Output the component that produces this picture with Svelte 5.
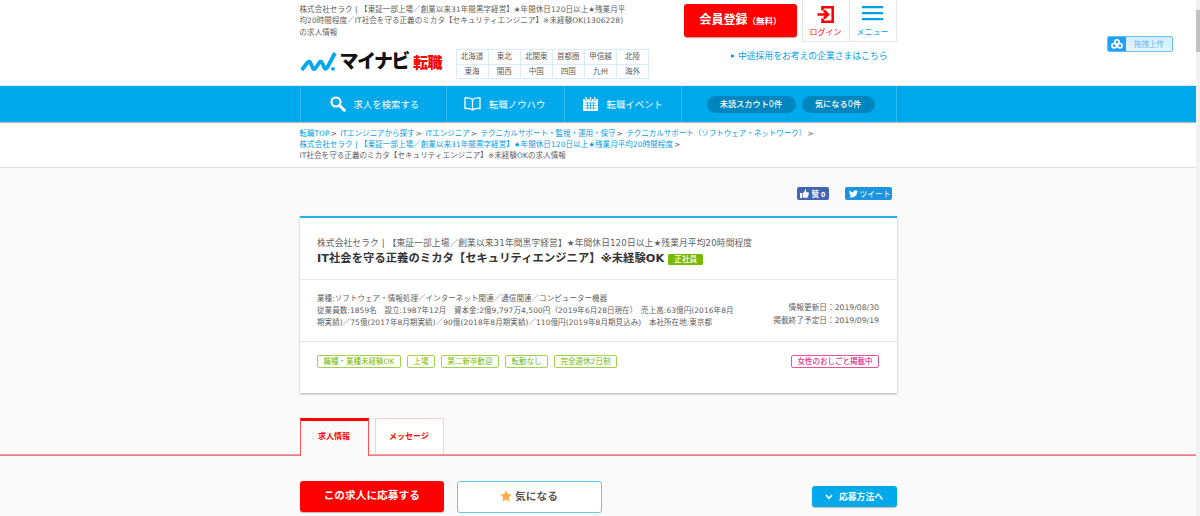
<script lang="ts">
  const regions = [
    ['北海道', '東北', '北関東', '首都圏', '甲信越', '北陸'],
    ['東海', '関西', '中国', '四国', '九州', '海外']
  ];

  const crumbs = [
    { label: '転職TOP' },
    { label: 'ITエンジニアから探す' },
    { label: 'ITエンジニア' },
    { label: 'テクニカルサポート・監視・運用・保守' },
    { label: 'テクニカルサポート（ソフトウェア・ネットワーク）' }
  ];

  const features = ['職種・業種未経験OK', '上場', '第二新卒歓迎', '転勤なし', '完全週休2日制'];
  const featureWidths = [84, 28, 58, 43, 63];
</script>

<header class="header">
  <div class="inner header-inner">
    <div class="header-left">
      <h1 class="lead">
        <span>株式会社セラク | 【東証一部上場／創業以来31年間黒字経営】★年間休日120日以上★残業月平</span>
        <span>均20時間程度／IT社会を守る正義のミカタ【セキュリティエンジニア】※未経験OK(1306228)</span>
        <span>の求人情報</span>
      </h1>
      <div class="brand">
        <div class="logo">
          <svg class="logo-mark" viewBox="0 0 37 21" width="37" height="21">
            <path d="M1.700 19L7.500 11.500Q9.300 9.500 10.500 12L12.800 17Q14 19.300 15.500 17.200L19.500 11.300Q21 9.500 22.200 12L24.300 16.500Q25.600 19 27.300 16.500L35 2" fill="none" stroke="#00a9ec" stroke-width="3.800" />
            <circle cx="33" cy="17.800" r="1.900" fill="#00a9ec" />
          </svg>
          <span class="logo-name">マイナビ</span>
          <span class="logo-sub">転職</span>
        </div>
        <div class="regions">
          {#each regions as row}
            {#each row as region}
              <a class="region">{region}</a>
            {/each}
          {/each}
        </div>
      </div>
    </div>
    <div class="header-right">
      <div class="account">
        <a class="signup">会員登録<small>（無料）</small></a>
        <div class="account-links">
          <a class="account-link login">
            <svg viewBox="0 0 18 18" width="18" height="18" fill="none" stroke="#f00" stroke-width="2.600">
              <path d="M5.500 5.500V2.300H15.700V16.700H5.500V13.500" />
              <path d="M0.500 9.500H10.500M7 5.500L11 9.500L7 13.500" />
            </svg>
            <span>ログイン</span>
          </a>
          <a class="account-link menu">
            <svg viewBox="0 0 21 18" width="21" height="18" stroke="#00a0e4" stroke-width="2.300">
              <path d="M0 2.200H21M0 8.200H21M0 14.200H21" />
            </svg>
            <span>メニュー</span>
          </a>
        </div>
      </div>
      <a class="for-company">中途採用をお考えの企業さまはこちら</a>
    </div>
  </div>
</header>

<nav class="nav">
  <div class="inner nav-inner">
    <a class="nav-item search">
      <svg viewBox="0 0 16 16" width="16" height="16" fill="none" stroke="#fff">
        <circle cx="6" cy="6" r="4.500" stroke-width="2.200" />
        <path d="M9.500 9.500L14.300 14.300" stroke-width="3" stroke-linecap="round" />
      </svg>
      <span>求人を検索する</span>
    </a>
    <a class="nav-item knowhow">
      <svg viewBox="0 0 17 14" width="17" height="14" fill="none" stroke="#fff" stroke-width="1.300">
        <path d="M8.500 2.500C6.500 0.700 4 0.700 1 1V11.500C4 11 6.500 11.200 8.500 13C10.500 11.200 13 11 16 11.500V1C13 0.700 10.500 0.700 8.500 2.500V12.500" />
      </svg>
      <span>転職ノウハウ</span>
    </a>
    <a class="nav-item event">
      <svg viewBox="0 0 17 14" width="17" height="14">
        <path d="M1 2H16V14H1Z" fill="#fff" />
        <path d="M4.200 0V3.500M8.500 0V3.500M12.800 0V3.500" stroke="#00a9ec" stroke-width="2.600" />
        <path d="M4.200 0V3M8.500 0V3M12.800 0V3" stroke="#fff" stroke-width="1.200" />
        <path d="M3 6H14M3 8.500H14M3 11H14M5.500 5V12.500M8.500 5V12.500M11.500 5V12.500" stroke="#00a9ec" stroke-width="0.700" />
      </svg>
      <span>転職イベント</span>
    </a>
    <div class="nav-status">
      <a class="pill scout">未読スカウト0件</a>
      <a class="pill liked">気になる0件</a>
    </div>
  </div>
</nav>

<div class="breadcrumb">
  <div class="inner">
    <div class="crumb-row">
      {#each crumbs as crumb}
        <a>{crumb.label}</a><i>&gt;</i>
      {/each}
    </div>
    <div class="crumb-row wide">
      <a>株式会社セラク | 【東証一部上場／創業以来31年間黒字経営】★年間休日120日以上★残業月平均20時間程度</a><i>&gt;</i>
    </div>
    <div class="crumb-row wide">IT社会を守る正義のミカタ【セキュリティエンジニア】※未経験OKの求人情報</div>
  </div>
</div>

<main>
  <div class="inner">
    <div class="social">
      <a class="like">
        <svg viewBox="0 0 10 10" width="9" height="9" fill="#fff">
          <path d="M0 4.500H2.500V10H0ZM3.200 4.700L5.500 2V0.500C6.500 0 7.300 1 6.600 3.700H9.300C10 3.700 10 5 9.500 5.300C10 6 9.700 6.800 9.100 7C9.400 7.600 9.100 8.300 8.500 8.500C8.600 9.200 8.300 9.700 7.700 9.700H4.500L3.200 9Z" />
        </svg>
        <span>赞 0</span>
      </a>
      <a class="tweet">
        <svg viewBox="0 0 24 20" width="9" height="8" fill="#fff">
          <path d="M24 2.400a10 10 0 0 1-2.800.8A5 5 0 0 0 23.300.4a10 10 0 0 1-3.100 1.200A4.900 4.900 0 0 0 11.800 6 14 14 0 0 1 1.700.9a4.900 4.900 0 0 0 1.500 6.600A5 5 0 0 1 1 6.900a4.900 4.900 0 0 0 3.900 4.900 5 5 0 0 1-2.200.1 4.900 4.900 0 0 0 4.600 3.400A10 10 0 0 1 0 17.300 14 14 0 0 0 21.500 4.900 10 10 0 0 0 24 2.400Z" />
        </svg>
        <span>ツイート</span>
      </a>
    </div>

    <section class="card">
      <div class="card-head">
        <p class="company">株式会社セラク | 【東証一部上場／創業以来31年間黒字経営】★年間休日120日以上★残業月平均20時間程度</p>
        <h2><span class="job-title">IT社会を守る正義のミカタ【セキュリティエンジニア】※未経験OK</span><span class="status">正社員</span></h2>
      </div>
      <div class="card-body">
        <div class="profile">
          <p>業種:ソフトウェア・情報処理／インターネット関連／通信関連／コンピューター機器</p>
          <p>従業員数:1859名　設立:1987年12月　資本金:2億9,797万4,500円（2019年6月28日現在）　売上高:63億円(2016年8月</p>
          <p>期実績)／75億(2017年8月期実績)／90億(2018年8月期実績)／110億円(2019年8月期見込み)　本社所在地:東京都</p>
        </div>
        <div class="dates">
          <p>情報更新日：2019/08/30</p>
          <p>掲載終了予定日：2019/09/19</p>
        </div>
      </div>
      <div class="card-foot">
        {#each features as feature, i}
          <span class="tag" style="width: {featureWidths[i]}px">{feature}</span>
        {/each}
        <span class="tag pink">女性のおしごと掲載中</span>
      </div>
    </section>
  </div>

  <div class="tab-bar">
    <div class="inner tabs">
      <a class="tab active">求人情報</a>
      <a class="tab">メッセージ</a>
    </div>
  </div>

  <div class="inner actions">
    <a class="apply">この求人に応募する</a>
    <a class="keep">
      <svg viewBox="0 0 12 12" width="12" height="12"><path d="M6 0.300L7.700 4L11.800 4.500L8.800 7.300L9.600 11.500L6 9.400L2.400 11.500L3.200 7.300L0.200 4.500L4.300 4Z" fill="#fdac45" /></svg>
      <span>気になる</span>
    </a>
    <a class="how-to">
      <svg viewBox="0 0 8 6" width="8" height="6"><path d="M1 1L4 4.300L7 1" fill="none" stroke="#fff" stroke-width="1.500" /></svg>
      <span>応募方法へ</span>
    </a>
  </div>
</main>

<div class="upload">
  <span class="upload-icon">
    <svg viewBox="0 0 12 10" width="12" height="10" fill="none" stroke="#fff" stroke-width="1.700">
      <circle cx="6" cy="3.100" r="2.200" />
      <circle cx="3.100" cy="6.700" r="2.200" />
      <circle cx="8.900" cy="6.700" r="2.200" />
    </svg>
  </span>
  <span class="upload-text">拖拽上传</span>
</div>

<div class="scrollbar"><div class="thumb"></div></div>

<style>
  :global(body) {
    margin: 0;
    height: 516px;
    overflow: hidden;
    background: #fafafa;
    color: #606060;
    font-family: 'DejaVu Sans', 'Noto Sans CJK JP', sans-serif;
    font-size: 7.5px;
  }

  p,
  h1,
  h2 {
    margin: 0;
    font-weight: 400;
  }

  a,
  span {
    white-space: nowrap;
  }

  svg {
    display: block;
    flex: none;
  }

  .inner {
    width: 597px;
    margin-left: 299.5px;
  }

  /* header */
  .header {
    height: 85px;
    background: #fff;
    border-bottom: 1px solid #dde8ed;
  }

  .header-inner {
    display: flex;
    justify-content: space-between;
  }

  .lead {
    padding-top: 4px;
    font-size: 7.5px;
    letter-spacing: 0.08px;
    line-height: 11.4px;
  }

  .lead span {
    display: block;
  }

  .brand {
    display: flex;
    align-items: flex-start;
    padding-top: 11px;
  }

  .logo {
    display: flex;
    align-items: center;
    width: 156px;
    height: 24px;
  }

  .logo-name {
    margin-left: 3px;
    width: 71.5px;
    color: #111;
    font-size: 19px;
    font-weight: 900;
    letter-spacing: -1.6px;
    line-height: 24px;
  }

  .logo-sub {
    margin-left: 2px;
    color: #f00;
    font-size: 15px;
    font-weight: 900;
    letter-spacing: -0.5px;
  }

  .regions {
    display: grid;
    grid-template-columns: repeat(6, 32.1px);
    grid-auto-rows: 14.5px;
    border-top: 1px solid #d5eefa;
    border-left: 1px solid #d5eefa;
  }

  .region {
    box-sizing: border-box;
    border-right: 1px solid #d5eefa;
    border-bottom: 1px solid #d5eefa;
    font-size: 7.5px;
    line-height: 13.5px;
    text-align: center;
  }

  .header-right {
    display: flex;
    flex-direction: column;
    align-items: flex-end;
  }

  .account {
    display: flex;
    align-items: flex-start;
  }

  .signup {
    width: 113px;
    height: 33px;
    margin: 4px 4.5px 0 0;
    border-radius: 3px;
    background: #f00;
    box-shadow: 0 1px 1px #c99;
    color: #fff;
    font-size: 12px;
    font-weight: 700;
    line-height: 32px;
    text-align: center;
  }

  .signup small {
    font-size: 8.5px;
  }

  .account-links {
    display: flex;
    height: 41px;
    border: 1px solid #e5e5e5;
    border-top: 0;
  }

  .account-link {
    display: flex;
    flex-direction: column;
    align-items: center;
    width: 46px;
    padding-top: 5px;
    font-size: 8px;
  }

  .account-link span {
    margin-top: 4px;
    line-height: 12px;
  }

  .login {
    border-right: 1px solid #e5e5e5;
    color: #f00;
  }

  .menu {
    color: #00a0e4;
  }

  .for-company {
    display: flex;
    align-items: center;
    margin: 7px 9px 0 0;
    color: #00a0e4;
    font-size: 8.8px;
    line-height: 14px;
  }

  .for-company::before {
    content: '';
    margin-right: 3px;
    border: 2.5px solid transparent;
    border-left: 4px solid #00a0e4;
    border-right: 0;
  }

  /* navigation */
  .nav {
    height: 36px;
    background: #00a9ec;
    box-shadow: 0 1px 1px #bbb;
  }

  .nav-inner {
    box-sizing: border-box;
    display: flex;
    height: 36px;
    border-left: 1px solid #33baf0;
    border-right: 1px solid #33baf0;
  }

  .nav-item {
    box-sizing: border-box;
    display: flex;
    align-items: center;
    gap: 8px;
    border-right: 1px solid #33baf0;
    color: #fff;
    font-size: 9.4px;
  }

  .search {
    width: 146.5px;
    padding-left: 29px;
  }

  .knowhow {
    width: 117.5px;
    padding-left: 17px;
  }

  .event {
    width: 117.5px;
    padding-left: 17px;
  }

  .nav-status {
    display: flex;
    align-items: center;
    gap: 6px;
    padding-left: 24.5px;
  }

  .pill {
    height: 17px;
    border-radius: 9px;
    background: #0085be;
    color: #fff;
    font-size: 8.2px;
    font-weight: 500;
    line-height: 17px;
    text-align: center;
  }

  .scout {
    width: 89px;
  }

  .liked {
    width: 73px;
  }

  /* breadcrumb */
  .breadcrumb {
    position: relative;
    z-index: -1;
    box-sizing: border-box;
    height: 46px;
    padding-top: 7px;
    border-bottom: 1px solid #ddd;
    background: #fff;
    line-height: 10.8px;
  }

  .crumb-row {
    display: flex;
    height: 10.8px;
    white-space: nowrap;
  }

  .crumb-row.wide {
    letter-spacing: 0.08px;
  }

  .crumb-row a {
    color: #00a0e4;
  }

  .crumb-row i {
    margin: 0 3.5px 0 1px;
    font-style: normal;
  }

  /* share buttons */
  .social {
    display: flex;
    justify-content: flex-end;
    gap: 16px;
    padding: 18px 5px 0 0;
  }

  .social a {
    display: flex;
    align-items: center;
    height: 13px;
    color: #fff;
    border-radius: 2px;
  }

  .like {
    box-sizing: border-box;
    width: 32px;
    padding-left: 3px;
    gap: 3px;
    background: #4267b2;
    font-size: 7.5px;
    font-weight: 700;
    font-family: 'Noto Sans', 'Noto Sans CJK SC', sans-serif;
  }

  .tweet {
    box-sizing: border-box;
    width: 47px;
    padding-left: 4px;
    gap: 2px;
    background: #1b95e0;
    font-size: 7.8px;
  }

  main {
    padding-top: 1px;
  }

  /* job card */
  .card {
    box-sizing: border-box;
    height: 177px;
    margin-top: 15.5px;
    border-top: 2px solid #22b5ed;
    background: #fff;
    box-shadow: 0 1px 2px #aaa;
  }

  .card-head {
    box-sizing: border-box;
    height: 62.5px;
    padding: 19px 17.5px 0;
    border-bottom: 1px solid #e9e9e9;
  }

  .company {
    font-size: 8.7px;
    letter-spacing: 0.14px;
    line-height: 13px;
    white-space: nowrap;
  }

  h2 {
    display: flex;
    align-items: center;
    gap: 4px;
    line-height: 17px;
  }

  .job-title {
    color: #333;
    font-size: 11.3px;
    font-weight: 700;
    letter-spacing: 0.05px;
  }

  .status {
    width: 35px;
    height: 11px;
    margin-top: 2px;
    border-radius: 1.5px;
    background: #76b900;
    color: #fff;
    font-size: 7.6px;
    font-weight: 500;
    line-height: 11px;
    text-align: center;
  }

  .card-body {
    box-sizing: border-box;
    display: flex;
    justify-content: space-between;
    height: 62px;
    padding: 12.5px 17.5px 0;
    border-bottom: 1px solid #e4e4e4;
    white-space: nowrap;
  }

  .profile {
    letter-spacing: 0.07px;
    line-height: 12px;
  }

  .dates {
    padding-top: 8px;
    font-size: 7.7px;
    line-height: 13.3px;
    text-align: right;
  }

  .card-foot {
    display: flex;
    gap: 6px;
    padding: 13px 17.5px 0;
  }

  .tag {
    box-sizing: border-box;
    height: 13px;
    border: 1px solid #9fd34c;
    border-radius: 2px;
    color: #76b900;
    font-size: 7.5px;
    line-height: 11px;
    text-align: center;
  }

  .pink {
    width: 88px;
    margin-left: auto;
    border-color: #e4559a;
    color: #d7006c;
  }

  /* tabs */
  .tab-bar {
    margin-top: 25px;
    height: 38px;
    background: linear-gradient(#d9bcbc, #f66) bottom / 100% 2px no-repeat;
  }

  .tabs {
    display: flex;
    gap: 6px;
  }

  .tab {
    box-sizing: border-box;
    width: 69px;
    height: 36px;
    border: 1px solid #fcc;
    border-bottom: 0;
    background: #fff;
    color: #f00;
    font-size: 8px;
    font-weight: 700;
    line-height: 36px;
    text-align: center;
  }

  .tab.active {
    height: 38px;
    border: 1px solid #f55;
    border-top: 3px solid #f00;
    border-bottom: 0;
    background: #fafafa;
    line-height: 32px;
  }

  /* actions */
  .actions {
    display: flex;
    align-items: center;
    padding-top: 25px;
  }

  .apply {
    width: 144.5px;
    height: 31px;
    border-radius: 3px;
    background: #f00;
    box-shadow: 0 1px 1px #bbb;
    color: #fff;
    font-size: 10.7px;
    font-weight: 700;
    line-height: 30px;
    text-align: center;
  }

  .keep {
    box-sizing: border-box;
    display: flex;
    align-items: center;
    justify-content: center;
    gap: 3px;
    width: 145px;
    height: 32px;
    margin-left: 12.5px;
    padding-bottom: 2px;
    border: 1px solid #62c9ef;
    border-radius: 3px;
    background: #fff;
    color: #555;
    font-size: 10.7px;
    font-weight: 700;
  }

  .how-to {
    display: flex;
    align-items: center;
    justify-content: center;
    gap: 6px;
    width: 85px;
    height: 21px;
    margin-left: auto;
    border-radius: 3px;
    background: #00a9ec;
    box-shadow: 0 1px 1px #bbb;
    color: #fff;
    font-size: 8.8px;
    font-weight: 700;
  }

  /* floating upload button over the page */
  .upload {
    position: absolute;
    top: 36px;
    left: 1107px;
    box-sizing: border-box;
    display: flex;
    width: 66px;
    height: 15.5px;
    border: 1px solid #6bbcfa;
    border-radius: 2px;
    background: linear-gradient(#cfeefe, #e4f6ff);
    overflow: hidden;
  }

  .upload-icon {
    display: flex;
    align-items: center;
    justify-content: center;
    width: 18px;
    background: #1ea0ff;
  }

  .upload-text {
    flex: 1;
    color: #6db8ee;
    font-family: 'Noto Sans CJK SC', sans-serif;
    font-size: 7.5px;
    line-height: 13px;
    text-align: center;
  }

  .scrollbar {
    position: absolute;
    top: 0;
    right: 0;
    box-sizing: border-box;
    width: 4px;
    height: 516px;
    padding-top: 10px;
    background: #f1f1f1;
  }

  .thumb {
    height: 42px;
    background: #c1c1c1;
  }
</style>
